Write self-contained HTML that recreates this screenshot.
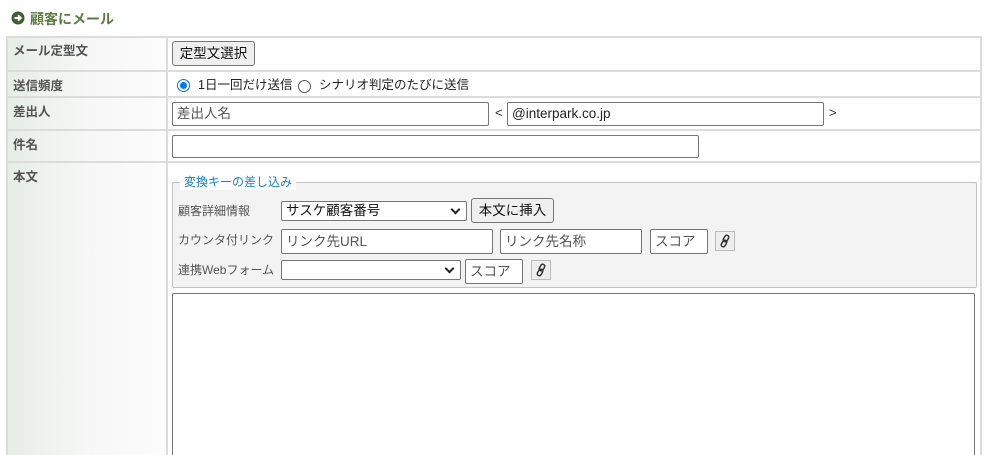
<!DOCTYPE html>
<html><head><meta charset="utf-8"><style>
*{box-sizing:border-box;margin:0;padding:0}
html,body{width:990px;height:455px;overflow:hidden}
body{background:#fff;font-family:"Liberation Sans","Noto Sans CJK JP",sans-serif;font-size:13px;color:#333;position:relative}
.a{position:absolute}
.lbl{position:absolute;left:13px;font-weight:bold;color:#555;font-size:12.5px}
.hl{position:absolute;left:6px;width:976px;height:2px;background:#dcdcdc}
.inp{position:absolute;border:1px solid #767676;border-radius:2px;background:#fff;font-size:13.5px;padding-left:4px;color:#555;display:flex;align-items:center;line-height:1}
.btn{position:absolute;border:1px solid #767676;border-radius:3px;background:#efefef;font-size:13.5px;color:#111;display:flex;align-items:center;justify-content:center;line-height:1}
.sel{position:absolute;border:1px solid #767676;border-radius:2px;background:#fff;font-size:13.5px;padding-left:4px;color:#111;display:flex;align-items:center;line-height:1}
.sel:after{content:"";position:absolute;right:7px;top:4px;width:5px;height:5px;border-right:2px solid #222;border-bottom:2px solid #222;transform:rotate(45deg)}
.fl{position:absolute;left:178px;font-size:12px;color:#555}
.ico{position:absolute;width:20px;height:20px;border:1px solid #bbb;background:#eee}
</style></head><body>
<svg class="a" style="left:11px;top:11px" width="14" height="14" viewBox="0 0 14 14"><circle cx="7" cy="7" r="6.5" fill="#3f5f33"/><path d="M3.5 7H9.5M7 4.3L9.8 7L7 9.7" stroke="#fff" stroke-width="2" fill="none"/></svg>
<div class="a" style="left:30px;top:9px;font-size:14px;font-weight:bold;color:#5d7c44">顧客にメール</div>

<div class="a" style="left:6px;top:36px;width:976px;height:419px;border:2px solid #dcdcdc;border-bottom:none"></div>
<div class="a" style="left:8px;top:38px;width:158px;height:417px;background:linear-gradient(90deg,#e8ede9,#f6f7f6 50%,#fcfcfc)"></div>
<div class="a" style="left:166px;top:36px;width:2px;height:419px;background:#dcdcdc"></div>
<div class="hl" style="top:70px"></div>
<div class="hl" style="top:96px"></div>
<div class="hl" style="top:129px"></div>
<div class="hl" style="top:161px"></div>

<div class="lbl" style="top:40px">メール定型文</div>
<div class="lbl" style="top:75px">送信頻度</div>
<div class="lbl" style="top:101px">差出人</div>
<div class="lbl" style="top:134px">件名</div>
<div class="lbl" style="top:166px">本文</div>

<div class="btn" style="left:172px;top:41px;width:83px;height:25px">定型文選択</div>

<div class="a" style="left:177px;top:79px;width:13px;height:13px;border-radius:50%;border:1px solid #0075ff;background:#fff"><div style="position:absolute;left:2px;top:2px;width:7px;height:7px;border-radius:50%;background:#0075ff"></div></div>
<div class="a" style="left:198px;top:74px;font-size:12.5px;color:#222">1日一回だけ送信</div>
<div class="a" style="left:298px;top:80px;width:13px;height:13px;border-radius:50%;border:1px solid #555;background:#fff"></div>
<div class="a" style="left:319px;top:74px;font-size:12.5px;color:#222">シナリオ判定のたびに送信</div>

<div class="inp" style="left:172px;top:102px;width:317px;height:24px">差出人名</div>
<div class="a" style="left:495px;top:105px;font-size:13px">&lt;</div>
<div class="inp" style="left:507px;top:102px;width:317px;height:24px;color:#222">@interpark.co.jp</div>
<div class="a" style="left:829px;top:105px;font-size:13px">&gt;</div>

<div class="inp" style="left:172px;top:135px;width:527px;height:23px"></div>

<div class="a" style="left:172px;top:182px;width:805px;height:106px;border:1px solid #c2c2c2;border-radius:2px;background:#f3f3f3"></div>
<div class="a" style="left:180px;top:174px;padding:0 4px;background:#fff;font-size:12px;color:#1d7dbf;line-height:16px">変換キーの差し込み</div>

<div class="fl" style="top:202px">顧客詳細情報</div>
<div class="sel" style="left:281px;top:201px;width:186px;height:20px">サスケ顧客番号</div>
<div class="btn" style="left:471px;top:198px;width:83px;height:25px">本文に挿入</div>

<div class="fl" style="top:231px">カウンタ付リンク</div>
<div class="inp" style="left:281px;top:229px;width:212px;height:25px">リンク先URL</div>
<div class="inp" style="left:500px;top:229px;width:142px;height:25px">リンク先名称</div>
<div class="inp" style="left:650px;top:229px;width:58px;height:25px">スコア</div>
<div class="ico" style="left:715px;top:231px"><svg width="18" height="18" viewBox="0 0 18 18"><g fill="none" stroke="#333" stroke-width="1.5"><rect x="8" y="3" width="4" height="7" rx="2" transform="rotate(30 10 6.5)"/><rect x="6" y="8" width="4" height="7" rx="2" transform="rotate(30 8 11.5)"/></g></svg></div>

<div class="fl" style="top:261px">連携Webフォーム</div>
<div class="sel" style="left:281px;top:260px;width:180px;height:20px"></div>
<div class="inp" style="left:465px;top:259px;width:58px;height:25px">スコア</div>
<div class="ico" style="left:531px;top:260px"><svg width="18" height="18" viewBox="0 0 18 18"><g fill="none" stroke="#333" stroke-width="1.5"><rect x="8" y="3" width="4" height="7" rx="2" transform="rotate(30 10 6.5)"/><rect x="6" y="8" width="4" height="7" rx="2" transform="rotate(30 8 11.5)"/></g></svg></div>

<div class="a" style="left:172px;top:293px;width:803px;height:170px;border:1px solid #767676;border-radius:2px;background:#fff"></div>
</body></html>
